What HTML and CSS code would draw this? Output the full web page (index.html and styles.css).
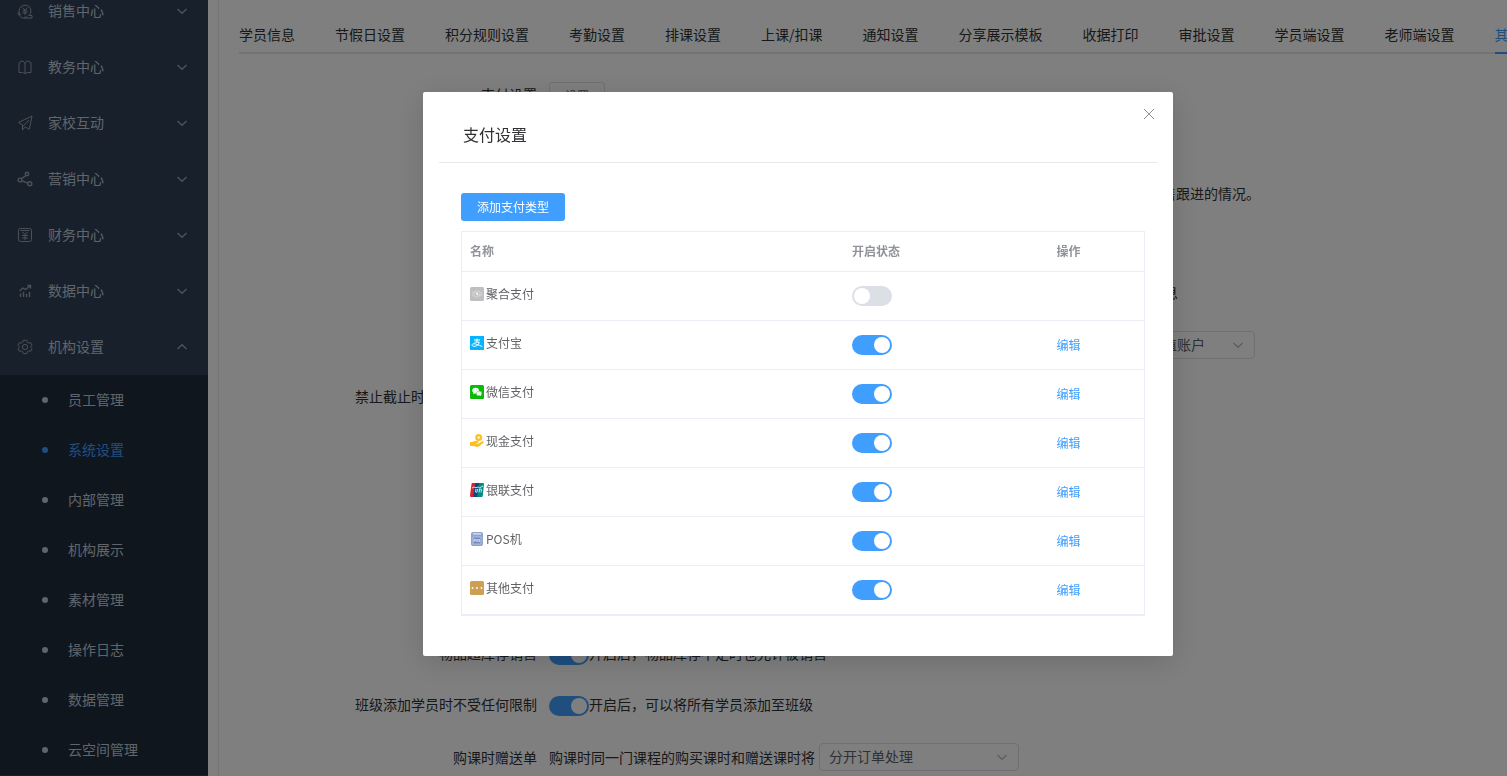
FILE: index.html
```html
<!DOCTYPE html>
<html lang="zh-CN">
<head>
<meta charset="utf-8">
<title>系统设置</title>
<link rel="stylesheet" href="styles.css">
</head>
<body>
<svg class="defs" aria-hidden="true">
  <symbol id="down" viewBox="0 0 12 12"><path d="M1.500 4 6 8.300 10.500 4" fill="none" stroke="currentColor" stroke-width="1.200"/></symbol>
</svg>
<div class="app">
  <aside class="sidebar">
    <nav class="menu">
      <button class="menu-item"><svg class="menu-icon" viewBox="0 0 16 16"><path d="M3.600 12.200a6 6 0 1 1 8.800 0M1 9.500C1 12 3.500 15 7 15h8v-2.500h-3.500M1 9.500l2.500 2.700M5.500 4.500 8 7.300l2.500-2.800M8 7.300V12M5.500 7.800h5M5.500 9.800h5M7 15l3-1.500"/></svg><span>销售中心</span><svg class="arrow"><use href="#down"/></svg></button>
      <button class="menu-item"><svg class="menu-icon" viewBox="0 0 16 16"><path d="M8 4.500V14M8 4.500C7.500 3 6.500 2 5 2L3 3 2 4v9.500h3.500c1.200 0 1.500 1 2.500 1s1.300-1 2.500-1H14V4l-1-1-2-1C9.500 2 8.500 3 8 4.500z"/></svg><span>教务中心</span><svg class="arrow"><use href="#down"/></svg></button>
      <button class="menu-item"><svg class="menu-icon" viewBox="0 0 16 16"><path d="M15 1 1.500 7.500l4 2.300V15l2.800-3 4 2.300L15 1zM12 5l-6.500 7"/></svg><span>家校互动</span><svg class="arrow"><use href="#down"/></svg></button>
      <button class="menu-item"><svg class="menu-icon bold" viewBox="0 0 16 16"><circle cx="10" cy="3" r="1.700"/><circle cx="3" cy="9" r="1.900"/><circle cx="12.800" cy="12.800" r="2"/><path d="M9 4.500 4.500 7.600M4.900 9.800l6 2.300"/></svg><span>营销中心</span><svg class="arrow"><use href="#down"/></svg></button>
      <button class="menu-item"><svg class="menu-icon" viewBox="0 0 16 16"><rect x="1.500" y="1.500" width="13" height="13" rx="2"/><path d="M3.500 3.500h9M5.500 5 8 7.500 10.500 5M8 7.500V13M5 8.500h6M5 11h6"/></svg><span>财务中心</span><svg class="arrow"><use href="#down"/></svg></button>
      <button class="menu-item"><svg class="menu-icon bold" viewBox="0 0 16 16"><path d="M2.500 8 6 5l2.500 1.500L13 3M10.500 2.500h3v3M3.500 14v-3.500M6.500 14V9M9.500 14v-3M12.500 14V9"/></svg><span>数据中心</span><svg class="arrow"><use href="#down"/></svg></button>
      <button class="menu-item"><svg class="menu-icon" viewBox="0 0 16 16"><circle cx="8" cy="8" r="2.600"/><path d="M6.300 1.300h3.400l.6 2 1.300.8 2-.5 1.400 2.600-1.300 1.500v.6L15 9.800l-1.400 2.600-2-.5-1.300.8-.6 2H6.300l-.6-2-1.300-.8-2 .5L1 9.800l1.300-1.500v-.6L1 6.200l1.400-2.600 2 .5 1.300-.8z"/></svg><span>机构设置</span><svg class="arrow up"><use href="#down"/></svg></button>
      <ul class="submenu">
        <li><a href="#"><span>员工管理</span></a></li>
        <li><a href="#" class="current"><span>系统设置</span></a></li>
        <li><a href="#"><span>内部管理</span></a></li>
        <li><a href="#"><span>机构展示</span></a></li>
        <li><a href="#"><span>素材管理</span></a></li>
        <li><a href="#"><span>操作日志</span></a></li>
        <li><a href="#"><span>数据管理</span></a></li>
        <li><a href="#"><span>云空间管理</span></a></li>
      </ul>
    </nav>
  </aside>
  <main class="content">
    <nav class="tabs">
      <a href="#">学员信息</a><a href="#">节假日设置</a><a href="#">积分规则设置</a><a href="#">考勤设置</a><a href="#">排课设置</a><a href="#">上课/扣课</a><a href="#">通知设置</a><a href="#">分享展示模板</a><a href="#">收据打印</a><a href="#">审批设置</a><a href="#">学员端设置</a><a href="#">老师端设置</a><a href="#" class="active">其他设置</a>
    </nav>
    <div class="form">
      <section class="group">
        <div class="row"><span class="label">支付设置</span><div class="field"><button class="plain">设置</button></div></div>
      </section>
      <section class="group follow">
        <div class="row"><span class="label"></span><div class="field text-end">售跟进的情况。</div></div>
      </section>
      <section class="group account">
        <div class="row"><span class="label"></span><div class="field medium"><span>息</span></div></div>
        <div class="row"><span class="label"></span><div class="field wide"><span class="select short"><select aria-label="账户"><option>储值账户</option></select><svg class="arrow"><use href="#down"/></svg></span></div></div>
        <div class="row"><span class="label start">禁止截止时</span></div>
      </section>
      <section class="group stock">
        <div class="row"><label class="label" for="s1">物品超库存销售</label><div class="field"><input class="switch" type="checkbox" id="s1" checked><span>开启后，物品库存不足时也允许被销售</span></div></div>
        <div class="row"><label class="label" for="s2">班级添加学员时不受任何限制</label><div class="field"><input class="switch" type="checkbox" id="s2" checked><span>开启后，可以将所有学员添加至班级</span></div></div>
        <div class="row level"><label class="label" for="gift">购课时赠送单</label><div class="field"><span>购课时同一门课程的购买课时和赠送课时将</span><span class="select"><select id="gift"><option>分开订单处理</option></select><svg class="arrow"><use href="#down"/></svg></span></div></div>
      </section>
    </div>
  </main>
</div>

<div class="overlay">
  <div class="dialog" role="dialog" aria-modal="true" aria-labelledby="dialog-title">
    <button class="close" aria-label="关闭"><svg viewBox="0 0 12 12"><path d="M1 1l10 10M11 1 1 11"/></svg></button>
    <h2 id="dialog-title">支付设置</h2>
    <div class="dialog-body">
      <button class="primary">添加支付类型</button>
      <table>
        <colgroup><col class="c-name"><col class="c-state"><col class="c-action"></colgroup>
        <thead><tr><th>名称</th><th>开启状态</th><th>操作</th></tr></thead>
        <tbody>
          <tr><td><span class="pay"><svg viewBox="0 0 14 14"><rect width="14" height="14" rx="1.500" fill="#bfbfbf"/><g fill="none" stroke="#e2e2e2"><circle cx="7" cy="7" r="3.200" stroke-width=".9" stroke-dasharray="4 1"/><path d="M2.800 9.500Q1.500 7 2.800 4.500M11.200 4.500Q12.500 7 11.200 9.500" stroke-width=".5"/></g><path d="m5.500 6 1.500-1 1.800 2.500-1.300 1.300z" fill="#f2f2f2"/></svg>聚合支付</span></td><td><input class="switch" type="checkbox" aria-label="聚合支付"></td><td></td></tr>
          <tr><td><span class="pay"><svg viewBox="0 0 14 14"><path fill="#06b4fd" d="M0 0h14v14H0z"/><path d="M4 4h6M7 2.500v3.700M4.500 6.100h4.800Q8.500 10.300 4 10.300C1.300 10.300 1.500 7.700 4 7.700c2 0 4.500 1.300 8.300 2.800" fill="none" stroke="#fff" stroke-width="1"/></svg>支付宝</span></td><td><input class="switch" type="checkbox" aria-label="支付宝" checked></td><td><a href="#">编辑</a></td></tr>
          <tr><td><span class="pay"><svg viewBox="0 0 14 14"><rect width="14" height="14" rx="1.500" fill="#09bb07"/><ellipse cx="5.600" cy="5.600" rx="3.300" ry="2.800" fill="#fff"/><path d="m3.500 7.500-.3 1.700 2-1z" fill="#fff"/><ellipse cx="9" cy="8.400" rx="2.800" ry="2.300" fill="#fff" stroke="#09bb07" stroke-width=".4"/><path d="m10 10.200 1.200.7-.3-1.500z" fill="#fff"/><g fill="#09bb07"><circle cx="4.500" cy="4.800" r=".4"/><circle cx="6.800" cy="4.800" r=".4"/><circle cx="8" cy="8" r=".3"/><circle cx="10" cy="8" r=".3"/></g></svg>微信支付</span></td><td><input class="switch" type="checkbox" aria-label="微信支付" checked></td><td><a href="#">编辑</a></td></tr>
          <tr><td><span class="pay"><svg viewBox="0 0 14 14"><circle cx="8.700" cy="3.500" r="3.500" fill="#fdbf23"/><circle cx="8.700" cy="3.500" r="1.300" fill="#fff3c5"/><path d="M0 8h2.500l2-1h2.700c1.600 0 1.800 1.700.3 2H6v.5h2.500L12 7.500c1.500-.8 2.400.4 1.500 1.300L9.500 12l-2.300 1L3 12H0z" fill="#fdbf23"/></svg>现金支付</span></td><td><input class="switch" type="checkbox" aria-label="现金支付" checked></td><td><a href="#">编辑</a></td></tr>
          <tr><td><span class="pay"><svg viewBox="0 0 14 14"><path d="M2.500 0H7L5 14H1Q0 14 0 12.500L1.500 1Q1.700 0 2.500 0z" fill="#d9232e"/><path d="M6 0h4.500L8.500 14H4Q3 14 3.300 12.500L5 1Q5.200 0 6 0z" fill="#11467c"/><path d="M10 0h3Q14 0 14 1l-1.300 12q-.2 1-1 1H8Q7 14 7.200 12.500L9 1Q9.200 0 10 0z" fill="#008b85"/><path d="M2 5 4 4l2 .8L8 4l1.500.8L13 3M6 6l-.5 3q1 1 1.500 0L7.500 6M9 9.500 9.500 6l2 .3-.5 3.200" fill="none" stroke="#e5edf2" stroke-width=".9"/></svg>银联支付</span></td><td><input class="switch" type="checkbox" aria-label="银联支付" checked></td><td><a href="#">编辑</a></td></tr>
          <tr><td><span class="pay"><svg viewBox="0 0 14 14"><rect x="1" width="12" height="14" rx="2" fill="#8ea2cd"/><rect x="2.800" y="1.200" width="8.500" height="1.300" rx=".6" fill="#e0e7f5"/><path d="M3 5h8v7H3z" fill="#7189bf" stroke="#c9d4eb" stroke-width=".7"/><path d="M4 10V7.500h1.500v1H4M6.300 7.500h1.400v2H6.300zM10 7.500H8.700v1H10v1H8.500" fill="none" stroke="#edf2ff" stroke-width=".6"/></svg>POS机</span></td><td><input class="switch" type="checkbox" aria-label="POS机" checked></td><td><a href="#">编辑</a></td></tr>
          <tr><td><span class="pay"><svg viewBox="0 0 14 14"><rect width="14" height="14" rx="1.500" fill="#cba052"/><g fill="#fff"><circle cx="2.500" cy="7" r=".9"/><circle cx="7" cy="7" r=".9"/><circle cx="11.500" cy="7" r=".9"/></g></svg>其他支付</span></td><td><input class="switch" type="checkbox" aria-label="其他支付" checked></td><td><a href="#">编辑</a></td></tr>
        </tbody>
      </table>
    </div>
  </div>
</div>
</body>
</html>
```
FILE: styles.css
```css
* { box-sizing: border-box; }
body {
  margin: 0;
  font: 14px/20px "Noto Sans CJK SC", sans-serif;
  color: #303133;
  background: #fff;
}
button, select, input { font: inherit; margin: 0; }
a { color: inherit; text-decoration: none; }
.defs { display: none; }
.app { display: flex; height: 100vh; overflow: hidden; }

.sidebar { flex: none; width: 208px; overflow: hidden; background: #304156; color: #bfcbd9; }
/* The menu is scrolled down by part of its first entry. */
.menu { margin-top: -17px; }
.menu-item {
  display: flex;
  align-items: center;
  width: 100%;
  height: 56px;
  padding: 0 20px 0 17px;
  border: 0;
  background: none;
  color: inherit;
  text-align: left;
}
.menu-item span { flex: 1; margin-left: 15px; padding-bottom: 2px; }
.menu-icon { width: 16px; height: 16px; fill: none; stroke: #99a3b0; stroke-width: 1; }
.menu-icon.bold { stroke-width: 1.400; }
.arrow { width: 12px; height: 12px; color: #a0a8b3; }
.arrow.up { transform: rotate(180deg); }
.submenu { margin: 0; padding: 0; list-style: none; background: #1f2d3d; }
.submenu a { display: flex; align-items: center; height: 50px; padding-left: 42px; }
.submenu a::before { content: ""; width: 6px; height: 6px; margin-right: 20px; border-radius: 50%; background: currentColor; }
.submenu span { padding-bottom: 2px; }
.submenu .current { color: #409eff; }

.content {
  flex: 1;
  min-width: 0;
  margin-left: 10px;
  padding: 24px 0 0 20px;
  border-left: 1px solid #ebebeb;
  overflow: hidden;
}
.tabs { display: flex; gap: 40px; overflow: hidden; white-space: nowrap; box-shadow: inset 0 -2px #e4e7ed; }
.tabs a { flex: none; padding-bottom: 10px; }
.tabs .active { color: #409eff; border-bottom: 2px solid #409eff; padding-bottom: 8px; }
.form { padding-top: 28px; }
.row { display: grid; grid-template-columns: 298px 1fr; gap: 12px; height: 28px; align-items: center; margin-bottom: 23px; white-space: nowrap; }
.label { text-align: right; margin-top: -4px; }
.label.start { justify-self: end; width: 182px; margin-top: 0; text-align: left; }
.field { display: flex; align-items: center; }
.field > span:not(.select) { margin-top: -4px; }
.level .label, .level .field > span:not(.select) { margin-top: 0; }
.wide { width: 706px; justify-content: flex-end; }
.text-end { width: 711px; justify-content: flex-end; }
.medium { width: 629px; justify-content: flex-end; }
.follow { padding-top: 46px; }
.account { padding-top: 50px; }
.stock { padding-top: 208px; }
.plain { height: 28px; width: 56px; padding: 0; border: 1px solid #dcdfe6; border-radius: 3px; background: #fff; color: #606266; font-size: 12px; }

.select { position: relative; width: 200px; margin-left: 4px; }
.select.short { width: 116px; }
.select select {
  display: block;
  width: 100%;
  height: 28px;
  padding: 0 30px 2px 9px;
  appearance: none;
  border: 1px solid #dcdfe6;
  border-radius: 4px;
  background: #fff;
  color: #606266;
}
.select .arrow { position: absolute; right: 11px; top: 8px; color: #b4b8c0; pointer-events: none; }

.switch {
  display: block;
  flex: none;
  width: 40px;
  height: 20px;
  padding: 2px;
  appearance: none;
  border-radius: 10px;
  background: #dcdfe6;
}
.switch::before { content: ""; display: block; width: 16px; height: 16px; border-radius: 50%; background: #fff; }
.switch:checked { background: #409eff; }
.switch:checked::before { margin-left: auto; }

.overlay {
  position: fixed;
  inset: 0;
  display: flex;
  justify-content: center;
  align-items: flex-start;
  padding: 92px 0 0 89px;
  background: rgba(0, 0, 0, .5);
}
.dialog {
  position: relative;
  width: 750px;
  padding: 24px 16px 40px;
  border-radius: 2px;
  background: #fff;
  box-shadow: 0 6px 30px rgba(0, 0, 0, .15);
}
.dialog h2 { margin: 0; padding: 6px 24px 16px; border-bottom: 1px solid #e8e8e8; font-size: 16px; font-weight: 400; line-height: 24px; }
.close { position: absolute; top: 16px; right: 18px; width: 12px; height: 12px; padding: 0; border: 0; background: none; }
.close svg { display: block; fill: none; stroke: #909399; }
.dialog-body { padding: 30px 12px 0 22px; font-size: 12px; color: #606266; }
.primary { display: block; height: 28px; padding: 0 16px; border: 0; border-radius: 3px; background: #409eff; color: #fff; }
table { width: 100%; margin-top: 10px; table-layout: fixed; border-collapse: separate; border-spacing: 0; border: 1px solid #ebeef5; }
.c-name { width: 56%; }
.c-state { width: 30%; }
.c-action { width: 14%; }
th, td { height: 49px; padding: 0 8px; border-bottom: 1px solid #ebeef5; text-align: left; line-height: 18px; }
th { height: 40px; padding-bottom: 2px; color: #909399; font-weight: 700; }
td a { display: block; color: #409eff; }
.pay { display: flex; align-items: center; gap: 2px; padding-bottom: 4px; }
.pay svg { width: 14px; height: 14px; }
```
